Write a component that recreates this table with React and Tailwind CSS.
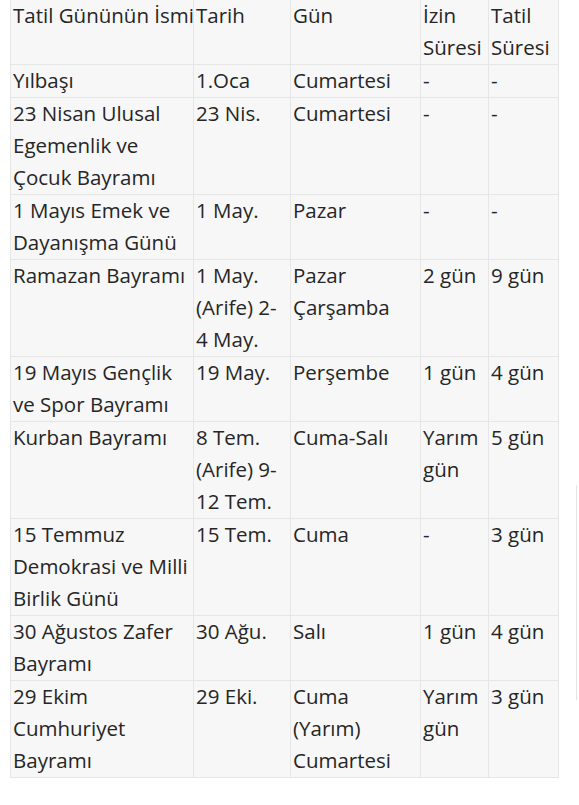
import React from "react";

const rows = [
  { name: ["Yılbaşı"], date: ["1.Oca"], day: ["Cumartesi"], izin: ["-"], tatil: ["-"] },
  { name: ["23 Nisan Ulusal", "Egemenlik ve", "Çocuk Bayramı"], date: ["23 Nis."], day: ["Cumartesi"], izin: ["-"], tatil: ["-"] },
  { name: ["1 Mayıs Emek ve", "Dayanışma Günü"], date: ["1 May."], day: ["Pazar"], izin: ["-"], tatil: ["-"] },
  { name: ["Ramazan Bayramı"], date: ["1 May.", "(Arife) 2-", "4 May."], day: ["Pazar", "Çarşamba"], izin: ["2 gün"], tatil: ["9 gün"] },
  { name: ["19 Mayıs Gençlik", "ve Spor Bayramı"], date: ["19 May."], day: ["Perşembe"], izin: ["1 gün"], tatil: ["4 gün"] },
  { name: ["Kurban Bayramı"], date: ["8 Tem.", "(Arife) 9-", "12 Tem."], day: ["Cuma-Salı"], izin: ["Yarım", "gün"], tatil: ["5 gün"] },
  { name: ["15 Temmuz", "Demokrasi ve Milli", "Birlik Günü"], date: ["15 Tem."], day: ["Cuma"], izin: ["-"], tatil: ["3 gün"] },
  { name: ["30 Ağustos Zafer", "Bayramı"], date: ["30 Ağu."], day: ["Salı"], izin: ["1 gün"], tatil: ["4 gün"] },
  { name: ["29 Ekim", "Cumhuriyet", "Bayramı"], date: ["29 Eki."], day: ["Cuma", "(Yarım)", "Cumartesi"], izin: ["Yarım", "gün"], tatil: ["3 gün"] },
];

function Cell({ lines, className = "" }) {
  return (
    <td className={"align-top pl-[2px] pr-0 py-0 border border-[#e6e6e6] bg-[#f7f7f7] whitespace-nowrap overflow-visible " + className}>
      <div className="-mt-px mb-px">
        {lines.map((l, i) => (
          <div key={i}>{l}</div>
        ))}
      </div>
    </td>
  );
}

export default function App() {
  return (
    <div className="flex w-[579px] h-[805px] bg-white overflow-hidden" style={{ fontFamily: "'Open Sans', 'Noto Sans', sans-serif" }}>
      <div className="pl-[10px]">
        <table className="border-collapse table-fixed w-[548px] text-[20.5px] leading-[32px] text-[#262626]">
          <colgroup>
            <col className="w-[183px]" />
            <col className="w-[97px]" />
            <col className="w-[130px]" />
            <col className="w-[68px]" />
            <col className="w-[70px]" />
          </colgroup>
          <thead>
            <tr>
              <Cell lines={["Tatil Gününün İsmi"]} className="border-t-0" />
              <Cell lines={["Tarih"]} className="border-t-0" />
              <Cell lines={["Gün"]} className="border-t-0" />
              <Cell lines={["İzin", "Süresi"]} className="border-t-0" />
              <Cell lines={["Tatil", "Süresi"]} className="border-t-0" />
            </tr>
          </thead>
          <tbody>
            {rows.map((r, i) => (
              <tr key={i}>
                <Cell lines={r.name} />
                <Cell lines={r.date} />
                <Cell lines={r.day} />
                <Cell lines={r.izin} />
                <Cell lines={r.tatil} />
              </tr>
            ))}
          </tbody>
        </table>
      </div>
      <div className="ml-auto mr-[2px] mt-[485px] h-[215px] w-0 border-l border-[#e3e3e3]" />
    </div>
  );
}
